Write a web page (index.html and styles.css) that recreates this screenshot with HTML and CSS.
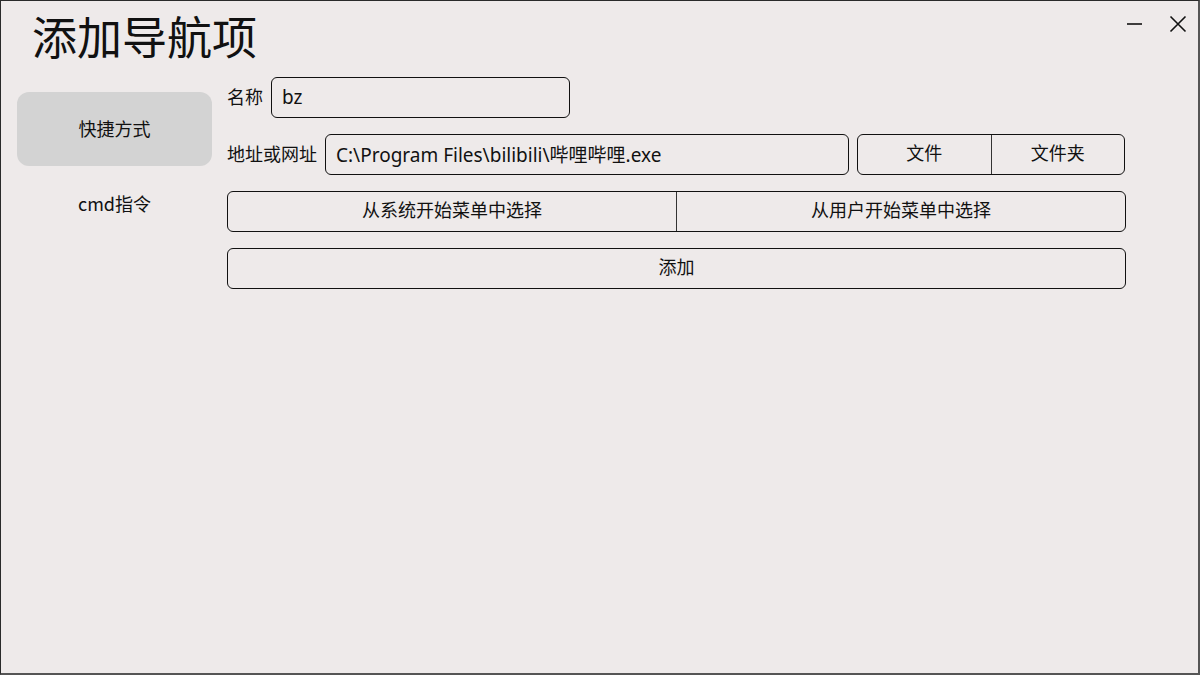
FILE: index.html
```html
<!DOCTYPE html>
<html lang="zh">
<head>
<meta charset="utf-8">
<link rel="stylesheet" href="styles.css">
</head>
<body>
<div class="window">
  <div class="titlebar">
    <h1 class="title">添加导航项</h1>
    <div class="winctl">
      <span class="ctl min"><svg width="16" height="16" viewBox="0 0 16 16"><path d="M1 8h15" stroke="#111" stroke-width="1.6"/></svg></span>
      <span class="ctl close"><svg width="18" height="18" viewBox="0 0 18 18"><path d="M1.5 1.5L16.5 16.5M16.5 1.5L1.5 16.5" stroke="#111" stroke-width="1.6"/></svg></span>
    </div>
  </div>
  <div class="body">
    <nav class="sidebar">
      <div class="navitem active">快捷方式</div>
      <div class="navitem">cmd指令</div>
    </nav>
    <main class="form">
      <div class="row">
        <label class="label">名称</label>
        <div class="input name">bz</div>
      </div>
      <div class="row">
        <label class="label">地址或网址</label>
        <div class="input path">C:\Program Files\bilibili\哔哩哔哩.exe</div>
        <div class="group files">
          <button class="seg">文件</button>
          <button class="seg">文件夹</button>
        </div>
      </div>
      <div class="row">
        <div class="group full">
          <button class="seg">从系统开始菜单中选择</button>
          <button class="seg">从用户开始菜单中选择</button>
        </div>
      </div>
      <div class="row">
        <button class="btn">添加</button>
      </div>
    </main>
  </div>
</div>
</body>
</html>
```
FILE: styles.css
```css
* { box-sizing: border-box; }
html, body { margin: 0; padding: 0; }
body {
  font-family: "Noto Sans CJK SC", "Noto Sans", sans-serif;
  color: #111;
  background: #eeeaea;
}
.window {
  width: 1200px;
  height: 675px;
  background: #eeeaea;
  border: 1px solid #2a2a2a;
  border-right: 2px solid #555;
  border-bottom: 2px solid #555;
  display: flex;
  flex-direction: column;
}
.titlebar {
  display: flex;
  justify-content: space-between;
  align-items: flex-start;
  height: 76px;
}
.title {
  margin: 0;
  padding: 4px 0 0 31px;
  font-size: 45px;
  font-weight: 400;
  line-height: 62px;
}
.winctl {
  display: flex;
  gap: 26px;
  padding: 14px 11px 0 0;
}
.ctl { display: flex; width: 18px; height: 18px; align-items: center; justify-content: center; }
.body {
  display: flex;
  flex: 1;
}
.sidebar {
  width: 226px;
  padding: 15px 15px 0 16px;
  display: flex;
  flex-direction: column;
}
.navitem {
  height: 74px;
  border-radius: 12px;
  display: flex;
  align-items: center;
  justify-content: center;
  font-size: 18px;
  color: #111;
}
.navitem.active { background: #d3d3d3; padding-bottom: 2px; }
.form {
  flex: 1;
  display: flex;
  flex-direction: column;
  gap: 16px;
  padding: 0 72px 0 0;
}
.row {
  display: flex;
  align-items: center;
  height: 41px;
  gap: 8px;
}
.label {
  font-size: 18px;
  white-space: nowrap;
  padding-bottom: 4px;
}
.input {
  height: 41px;
  border: 1.5px solid #111;
  border-radius: 6px;
  background: #eeeaea;
  font-size: 19px;
  padding: 0 10px 2px;
  display: flex;
  align-items: center;
  font-family: "Noto Sans", "Noto Sans CJK SC", sans-serif;
  white-space: nowrap;
}
.input.name { width: 299px; }
.input.path { width: 524px; }
.group {
  display: flex;
  height: 41px;
  border: 1.5px solid #111;
  border-radius: 6px;
  overflow: hidden;
}
.group.files { width: 268px; }
.group.full { width: 100%; }
.seg {
  flex: 1;
  border: 0;
  background: transparent;
  font: inherit;
  font-size: 18px;
  color: #111;
  padding: 0 0 5px;
}
.seg + .seg { border-left: 1.5px solid #333; }
.btn {
  width: 100%;
  height: 41px;
  border: 1.5px solid #111;
  border-radius: 6px;
  background: transparent;
  font: inherit;
  font-size: 18px;
  color: #111;
  padding: 0 0 5px;
}
```
